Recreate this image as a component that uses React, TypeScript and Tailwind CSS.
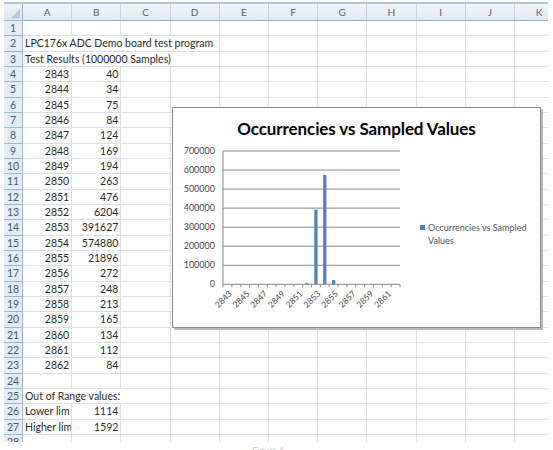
import React from "react";

const COLS = ["A", "B", "C", "D", "E", "F", "G", "H", "I", "J", "K"];
const COL_W = 49.2;
const ROW_H = 15.33;

const samples: [number, number][] = [
  [2843, 40], [2844, 34], [2845, 75], [2846, 84], [2847, 124],
  [2848, 169], [2849, 194], [2850, 263], [2851, 476], [2852, 6204],
  [2853, 391627], [2854, 574880], [2855, 21896], [2856, 272], [2857, 248],
  [2858, 213], [2859, 165], [2860, 134], [2861, 112], [2862, 84],
];

type Row = { text?: string; span?: number; a?: string; b?: string; aLeft?: boolean };

const rows: Row[] = [
  {},
  { text: "LPC176x ADC Demo board test program", span: 4 },
  { text: "Test Results (1000000 Samples)", span: 4 },
  ...samples.map(([v, n]) => ({ a: String(v), b: String(n) })),
  {},
  { text: "Out of Range values:", span: 3 },
  { a: "Lower lim", b: "1114", aLeft: true },
  { a: "Higher lim", b: "1592", aLeft: true },
  {},
];

function Cell({ w, children, align = "right" }: { w: number; children?: React.ReactNode; align?: string }) {
  return (
    <div
      className={"shrink-0 h-full border-r border-b border-[#dbe0e8] overflow-hidden whitespace-nowrap px-[2px] leading-[15px] " + (align === "left" ? "text-left" : "text-right")}
      style={{ width: w }}
    >
      {children}
    </div>
  );
}

function Chart() {
  const left = 50, right = 227, zero = 176.3, top = 43;
  const step = (zero - top) / 7;
  const cw = (right - left) / samples.length;
  return (
    <div className="absolute left-[172px] top-[107px] w-[369px] h-[221px] bg-white border border-[#8f8f8f] shadow-[2px_2px_0_#b9b9b9]">
      <div className="absolute left-0 right-0 top-[8px] text-center text-[17px] font-bold text-black tracking-[-0.1px]" style={{ fontFamily: "Lato, 'Open Sans', sans-serif" }}>
        Occurrencies vs Sampled Values
      </div>
      <svg className="absolute left-0 top-0" width="369" height="221" style={{ fontFamily: "Lato, 'Open Sans', sans-serif" }}>
        {Array.from({ length: 8 }).map((_, i) => {
          const y = zero - i * step;
          return (
            <g key={i}>
              <line x1={left} x2={right} y1={y} y2={y} stroke="#8a8a8a" strokeWidth="1" />
              <text x={42} y={y + 3} textAnchor="end" fontSize="9" fill="#4a4a55">{i * 100000}</text>
            </g>
          );
        })}
        <line x1={left} x2={left} y1={top} y2={zero + 3} stroke="#8a8a8a" />
        {samples.map((_, i) => (
          <line key={i} x1={left + (i + 1) * cw} x2={left + (i + 1) * cw} y1={zero} y2={zero + 3} stroke="#8a8a8a" />
        ))}
        {samples.map(([v, n], i) => {
          const h = (n / 700000) * (zero - top);
          const cx = left + (i + 0.5) * cw;
          return h > 0.5 ? <rect key={v} x={cx - 1.6} y={zero - h} width="3.2" height={h} fill="#4f81bd" /> : null;
        })}
        {samples.map(([v], i) =>
          i % 2 === 0 ? (
            <text
              key={v}
              x={0}
              y={0}
              fontSize="8.5"
              fill="#4a4a55"
              textAnchor="end"
              transform={`translate(${left + (i + 0.5) * cw + 5},${zero + 10}) rotate(-45)`}
            >
              {v}
            </text>
          ) : null
        )}
        <rect x="247" y="117" width="5" height="5" fill="#4f81bd" />
        <text x="255" y="123" fontSize="9" fill="#555">Occurrencies vs Sampled</text>
        <text x="255" y="136" fontSize="9" fill="#555">Values</text>
      </svg>
    </div>
  );
}

export default function App() {
  return (
    <div className="relative w-[553px] h-[450px] bg-white overflow-hidden" style={{ fontFamily: "Lato, 'Open Sans', sans-serif" }}>
      <div className="absolute left-[4px] top-[2px] w-[544px] h-[440px] overflow-hidden border-t-2 border-[#b3c7e0]">
        {/* column headers */}
        <div className="flex h-[17px] text-[10px] text-[#5a6270] border-b border-[#9eb6ce]">
          <div className="w-[19px] shrink-0 h-full bg-gradient-to-b from-[#eef3fa] to-[#dbe5f2] border-r border-[#9eb6ce] relative">
            <div className="absolute right-[2px] bottom-[2px] w-0 h-0 border-l-[9px] border-l-transparent border-b-[9px] border-b-[#b6c8de]" />
          </div>
          {COLS.map((c) => (
            <div key={c} className="shrink-0 h-full bg-gradient-to-b from-[#f3f6fb] to-[#e2eaf5] border-r border-[#c5d3e4] flex items-center justify-center" style={{ width: COL_W }}>
              {c}
            </div>
          ))}
        </div>
        {rows.map((r, idx) => (
          <div key={idx} className="flex text-[10.5px] text-[#2c2c2c]" style={{ height: ROW_H }}>
            <div className="w-[19px] shrink-0 h-full bg-[#e4ecf7] border-r border-b border-[#9eb6ce] text-[#4b5b70] text-center leading-[15px]">
              {idx + 1}
            </div>
            {r.text ? (
              <>
                <Cell w={COL_W * (r.span ?? 1)} align="left">{r.text}</Cell>
                {COLS.slice(r.span ?? 1).map((c) => <Cell key={c} w={COL_W} />)}
              </>
            ) : (
              <>
                <Cell w={COL_W} align={r.aLeft ? "left" : "right"}>{r.a}</Cell>
                <Cell w={COL_W}>{r.b}</Cell>
                {COLS.slice(2).map((c) => <Cell key={c} w={COL_W} />)}
              </>
            )}
          </div>
        ))}
      </div>
      <Chart />
      <div className="absolute left-[252px] top-[446px] text-[9px] text-[#c8c8c8] leading-none">Figure 6</div>
    </div>
  );
}
